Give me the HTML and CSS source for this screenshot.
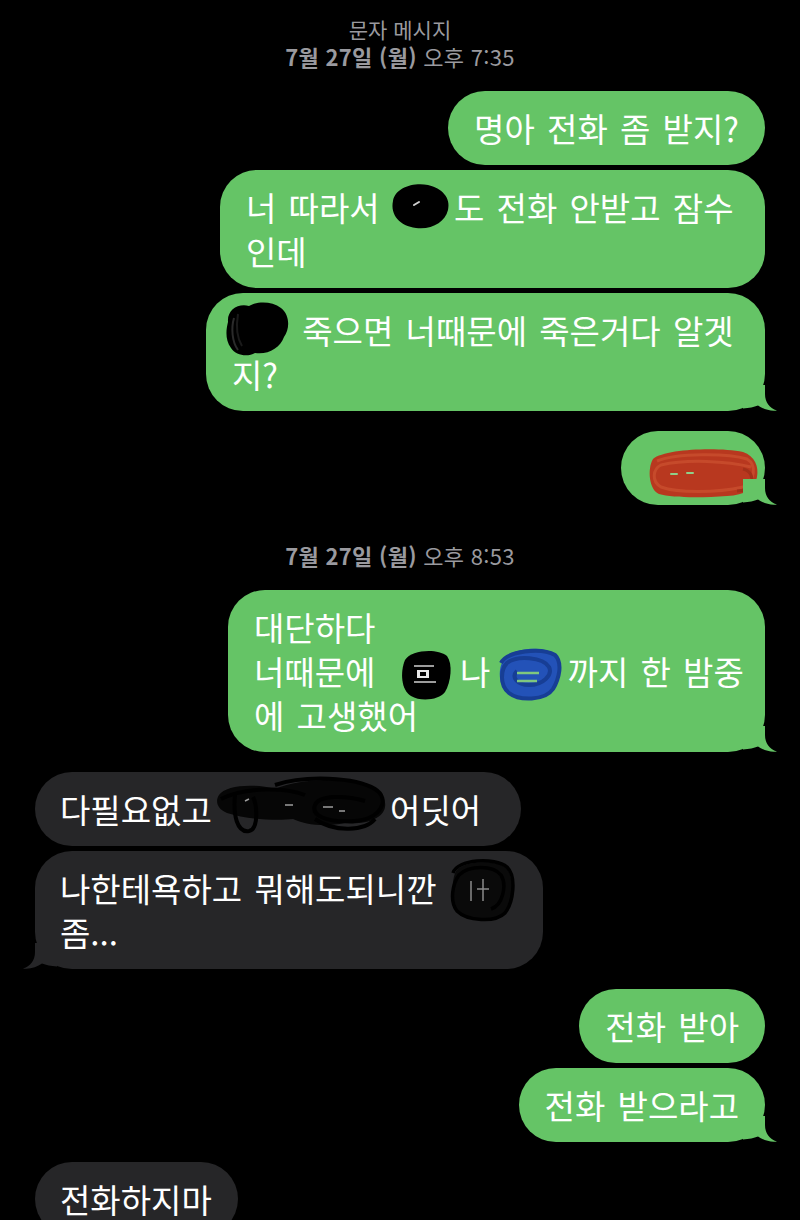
FILE: index.html
```html
<!DOCTYPE html>
<html lang="ko">
<head>
<meta charset="utf-8">
<title>문자 메시지</title>
<link rel="stylesheet" href="styles.css">
</head>
<body>
<main class="thread">
  <header class="meta">
    <div class="meta-title">문자 메시지</div>
    <div class="meta-time"><b>7월 27일 (월)</b> 오후 7:35</div>
  </header>

  <section class="group sent">
    <div class="bubble">명아 전화 좀 받지?</div>
    <div class="bubble w545">너 따라서 <span class="redact rd-a"><svg class="scrib" width="66" height="50" viewBox="0 0 66 50"><path d="M6,20 C8,7 26,1 41,4 C55,7 64,17 61,29 C58,41 45,49 29,47 C13,45 3,34 6,20 Z" fill="#000"/><path d="M27,24 l5,-3" stroke="#cfcfcf" stroke-width="2" stroke-linecap="round"/></svg></span>도 전화 안받고 잠수<br>인데</div>
    <div class="bubble w559 has-tail">
      <span class="redact rd-b"><svg class="scrib" width="68" height="58" viewBox="0 0 68 58"><path d="M4,22 C3,10 14,3 25,6 C33,1 48,1 57,8 C66,15 66,29 60,37 C56,48 44,55 31,53 C24,57 12,56 7,48 C1,40 2,30 4,22 Z" fill="#000"/><path d="M10,18 C7,28 8,42 14,50" stroke="#2b2b2b" stroke-width="2" fill="none"/><path d="M14,14 C12,26 13,38 18,46" stroke="#1a1a1a" stroke-width="2" fill="none"/></svg></span> 죽으면 너때문에 죽은거다 알겟<br>지?
      <svg class="tail tail-out green" width="35" height="26" viewBox="0 0 35 26"><path d="M0,0 H22 V9 C22,17 26,23 34,25.5 C27,26.5 20,24 15,20.5 C11,22 6,23 0,23.5 Z"/></svg>
    </div>
  </section>

  <section class="group sent">
    <div class="bubble has-tail">
      <span class="redact rd-red"><svg class="scrib" width="112" height="52" viewBox="0 0 112 52"><path d="M6,12 C18,2 70,0 96,5 C108,9 112,20 110,30 C108,42 98,48 80,49 C55,51 25,51 12,47 C2,43 0,22 6,12 Z" fill="#b8381f"/><path d="M10,14 C30,6 80,6 100,12 C110,18 108,34 96,40 C70,46 30,46 14,40 C4,34 6,22 14,18 C40,12 80,14 104,20" stroke="#c64a2b" stroke-width="3" fill="none"/><path d="M24,27 h6 M40,26 h6" stroke="#8fd08a" stroke-width="2" stroke-linecap="round"/><path d="M96,22 c8,2 10,8 8,14 c-2,6 -8,8 -14,8" stroke="#a23019" stroke-width="3" fill="none"/></svg></span>
      <svg class="tail tail-out green" width="35" height="26" viewBox="0 0 35 26"><path d="M0,0 H22 V9 C22,17 26,23 34,25.5 C27,26.5 20,24 15,20.5 C11,22 6,23 0,23.5 Z"/></svg>
    </div>
  </section>

  <header class="meta meta-second">
    <div class="meta-time"><b>7월 27일 (월)</b> 오후 8:53</div>
  </header>

  <section class="group sent">
    <div class="bubble w537 has-tail">대단하다<br>너때문에 <span class="redact rd-c"><svg class="scrib" width="56" height="54" viewBox="0 0 56 54"><path d="M8,12 C14,2 40,0 50,8 C56,16 54,34 48,44 C42,52 24,54 14,48 C4,42 3,24 8,12 Z" fill="#000"/><path d="M20,22 h12 v8 h-12 z" fill="#e8e8e8"/><path d="M23,24 h6 v4 h-6 z" fill="#000"/><path d="M17,18 h20 M17,34 h22" stroke="#cfcfcf" stroke-width="1.5"/></svg></span> 나 <span class="redact rd-d"><svg class="scrib" width="72" height="58" viewBox="0 0 72 58"><path d="M10,16 C16,4 46,0 60,8 C70,16 66,30 62,40 C56,54 30,58 18,50 C6,44 4,26 10,16 Z" fill="#2352b8"/><path d="M8,18 C14,6 48,2 62,10 C70,18 66,34 60,44 C52,56 26,56 16,48 C6,40 8,24 14,18 C24,10 50,12 56,22 C60,30 50,40 36,40 C24,40 18,32 24,26" stroke="#173e95" stroke-width="4" fill="none"/><path d="M24,28 h22 M24,36 h20" stroke="#7fc77e" stroke-width="2.5"/></svg></span>까지 한 밤중<br>에 고생했어
      <svg class="tail tail-out green" width="35" height="26" viewBox="0 0 35 26"><path d="M0,0 H22 V9 C22,17 26,23 34,25.5 C27,26.5 20,24 15,20.5 C11,22 6,23 0,23.5 Z"/></svg>
    </div>
  </section>

  <section class="group received">
    <div class="bubble w486">다필요없고 <span class="redact rd-e"><svg class="scrib" width="176" height="62" viewBox="0 0 176 62"><path d="M4,20 C10,10 40,8 60,14 C80,6 110,2 140,8 C160,12 172,20 170,32 C168,44 150,50 130,48 C110,52 90,50 78,44 C60,46 30,44 12,38 C2,34 0,26 4,20 Z" fill="#060606"/><path d="M6,24 C30,12 70,12 90,20 M20,20 C18,40 22,58 34,56 C44,54 42,30 38,22 M60,10 C90,0 140,2 160,14 C176,24 166,44 140,46 C110,48 96,40 100,30 C104,20 130,20 150,26 M100,44 C120,58 150,56 160,44" stroke="#000" stroke-width="4" fill="none"/><path d="M30,26 l4,-2 M70,30 h8 M108,32 h10 M124,36 h6" stroke="#9d9d9d" stroke-width="1.5"/></svg></span>어딧어</div>
    <div class="bubble w508 has-tail">나한테욕하고 뭐해도되니깐 <span class="redact rd-f"><svg class="scrib" width="66" height="66" viewBox="0 0 66 66"><path d="M6,16 C10,4 44,2 56,10 C66,18 64,44 58,54 C50,64 20,64 10,56 C2,48 2,28 6,16 Z" fill="#0a0a0a"/><path d="M4,16 C8,2 46,0 58,10 C68,20 64,46 56,56 C46,66 18,64 8,54 C0,44 4,26 10,18 C20,8 44,8 52,18 C58,28 54,48 42,52" stroke="#000" stroke-width="3.5" fill="none"/><path d="M22,24 v20 M34,22 v22 M28,32 h12" stroke="#8a8a8a" stroke-width="1.5"/></svg></span><br>좀...
      <svg class="tail tail-in gray" width="35" height="26" viewBox="0 0 35 26"><path d="M0,0 H22 V9 C22,17 26,23 34,25.5 C27,26.5 20,24 15,20.5 C11,22 6,23 0,23.5 Z"/></svg>
    </div>
  </section>

  <section class="group sent">
    <div class="bubble">전화 받아</div>
    <div class="bubble has-tail">전화 받으라고
      <svg class="tail tail-out green" width="35" height="26" viewBox="0 0 35 26"><path d="M0,0 H22 V9 C22,17 26,23 34,25.5 C27,26.5 20,24 15,20.5 C11,22 6,23 0,23.5 Z"/></svg>
    </div>
  </section>

  <section class="group received">
    <div class="bubble">전화하지마</div>
  </section>
</main>
</body>
</html>
```

FILE: styles.css
```css
html, body {
  margin: 0;
  padding: 0;
  background: #000;
}

body {
  font-family: "Noto Sans CJK KR", "Noto Sans", sans-serif;
  color: #fff;
}

.thread {
  display: flex;
  flex-direction: column;
  padding: 16px 35px 0 35px;
}

.meta {
  text-align: center;
  color: #9a9a9f;
  line-height: 27px;
}

.meta-title {
  font-size: 21px;
}

.meta-time {
  font-size: 22px;
  letter-spacing: 0.3px;
}

.meta b {
  font-weight: 700;
}

.meta-second {
  margin-top: 37px;
}

.group {
  display: flex;
  flex-direction: column;
  gap: 5px;
  margin-top: 20px;
}

.meta + .group {
  margin-top: 21px;
}

.group.sent {
  align-items: flex-end;
}

.group.received {
  align-items: flex-start;
}

.bubble {
  position: relative;
  box-sizing: border-box;
  padding: 15px 26px;
  border-radius: 37px;
  font-size: 33px;
  line-height: 44px;
  letter-spacing: 0;
  word-spacing: 3px;
  white-space: nowrap;
}

.sent .bubble {
  background: #65c466;
}

.received .bubble {
  background: #262628;
  padding-left: 25px;
}

.w545 { width: 545px; }
.w559 { width: 559px; }
.w537 { width: 537px; }
.w508 { width: 508px; }
.w486 { width: 486px; }

.redact {
  position: relative;
  display: inline-block;
  height: 44px;
  vertical-align: top;
}

.scrib {
  position: absolute;
  overflow: visible;
}

.rd-a { width: 62px; }
.rd-a .scrib { left: -5px; top: -4px; }

.rd-b { width: 58px; }
.rd-b .scrib { left: -8px; top: -8px; }

.rd-red { width: 92px; }
.rd-red .scrib { left: 0; top: 1px; }

.rd-c { width: 60px; }
.rd-c .scrib { left: 9px; top: -1px; }

.rd-d { width: 65px; }
.rd-d .scrib { left: -10px; top: -4px; }

.rd-e { width: 166px; }
.rd-e .scrib { left: -9px; top: -12px; }

.rd-f { width: 64px; }
.rd-f .scrib { left: 0; top: -9px; }

.tail {
  position: absolute;
  bottom: 0;
}

.tail-out {
  right: -13px;
}

.tail-in {
  left: -13px;
  transform: scaleX(-1);
}

.tail.green { fill: #65c466; }
.tail.gray { fill: #262628; }
```
